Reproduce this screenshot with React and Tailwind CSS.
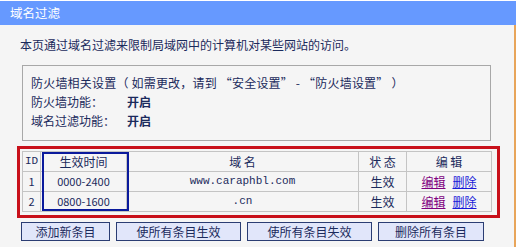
import React from 'react';

const rows = [
  { id: 1, time: '0000-2400', domain: 'www.caraphbl.com' },
  { id: 2, time: '0800-1600', domain: '.cn' },
];

function App() {
  return (
    <div
      className="w-[516px] h-[247px] bg-white pt-px overflow-hidden text-[12px] text-[#1b2a5c]"
      style={{ fontFamily: '"Noto Sans CJK SC", "Noto Sans", sans-serif' }}
    >
      {/* Header */}
      <div className="h-[24px] bg-[#6699ff] pl-[10px] flex items-center text-[12.5px] text-white">
        域名过滤
      </div>

      <div className="h-[222px] bg-[#f5f5f5] border-r-2 border-[#e8a55a]">
        <p className="pt-[12px] pl-[20px] leading-[16px]">
          本页通过域名过滤来限制局域网中的计算机对某些网站的访问。
        </p>

        {/* Firewall settings */}
        <div className="mt-[12px] ml-[22px] w-[469px] border border-[#a8a8a8] pt-[7px] pb-[10px] pl-[8px] leading-[19px]">
          <div className="tracking-[0.2px]">防火墙相关设置（ 如需更改，请到 “安全设置” - “防火墙设置” ）</div>
          <div className="flex">
            <span className="w-[96px]">防火墙功能：</span>
            <span className="font-bold">开启</span>
          </div>
          <div className="flex">
            <span className="w-[96px]">域名过滤功能：</span>
            <span className="font-bold">开启</span>
          </div>
        </div>

        {/* Rules table */}
        <div className="relative mt-[5px] ml-[17px] w-[483px] border-[3px] border-[#c8101a] pt-[2px] pl-[2px] pb-[3px]">
          <table className="border-collapse border border-[#c4c4c4] text-center">
            <thead>
              <tr className="h-[20px]">
                <th className="w-[18px] border border-[#c4c4c4] font-normal text-[11px]" style={{ fontFamily: '"Liberation Mono", monospace' }}>ID</th>
                <th className="w-[86px] border border-[#c4c4c4] font-normal">生效时间</th>
                <th className="w-[232px] border border-[#c4c4c4] font-normal">域 名</th>
                <th className="w-[48px] border border-[#c4c4c4] font-normal">状 态</th>
                <th className="w-[85px] border border-[#c4c4c4] font-normal">编 辑</th>
              </tr>
            </thead>
            <tbody>
              {rows.map((r) => (
                <tr key={r.id} className="h-[20px]">
                  <td className="border border-[#c4c4c4] text-[11px]">{r.id}</td>
                  <td className="border border-[#c4c4c4] text-[11px]">{r.time}</td>
                  <td className="border border-[#c4c4c4] text-[11px]" style={{ fontFamily: '"Liberation Mono", monospace' }}>
                    {r.domain}
                  </td>
                  <td className="border border-[#c4c4c4]">生效</td>
                  <td className="border border-[#c4c4c4]">
                    <span className="underline text-[#800080]">编辑</span>
                    <span className="underline text-[#1a1ad8] ml-[7px]">删除</span>
                  </td>
                </tr>
              ))}
            </tbody>
          </table>
          {/* highlight around the time column */}
          <div className="absolute left-[22px] top-[3px] w-[87px] h-[59px] border-2 border-[#0a1a9c]" />
        </div>

        {/* Buttons */}
        <div className="mt-[4px] ml-[21px] flex gap-[6px]">
          <button className="w-[89px] h-[19px] border border-[#2b3d73] bg-[#e1e6fa] text-[12px] leading-none text-[#1b2a5c]">添加新条目</button>
          <button className="w-[125px] h-[19px] border border-[#2b3d73] bg-[#e1e6fa] text-[12px] leading-none text-[#1b2a5c]">使所有条目生效</button>
          <button className="w-[125px] h-[19px] border border-[#2b3d73] bg-[#e1e6fa] text-[12px] leading-none text-[#1b2a5c]">使所有条目失效</button>
          <button className="w-[106px] h-[19px] border border-[#2b3d73] bg-[#e1e6fa] text-[12px] leading-none text-[#1b2a5c]">删除所有条目</button>
        </div>
      </div>
    </div>
  );
}

export default App;
